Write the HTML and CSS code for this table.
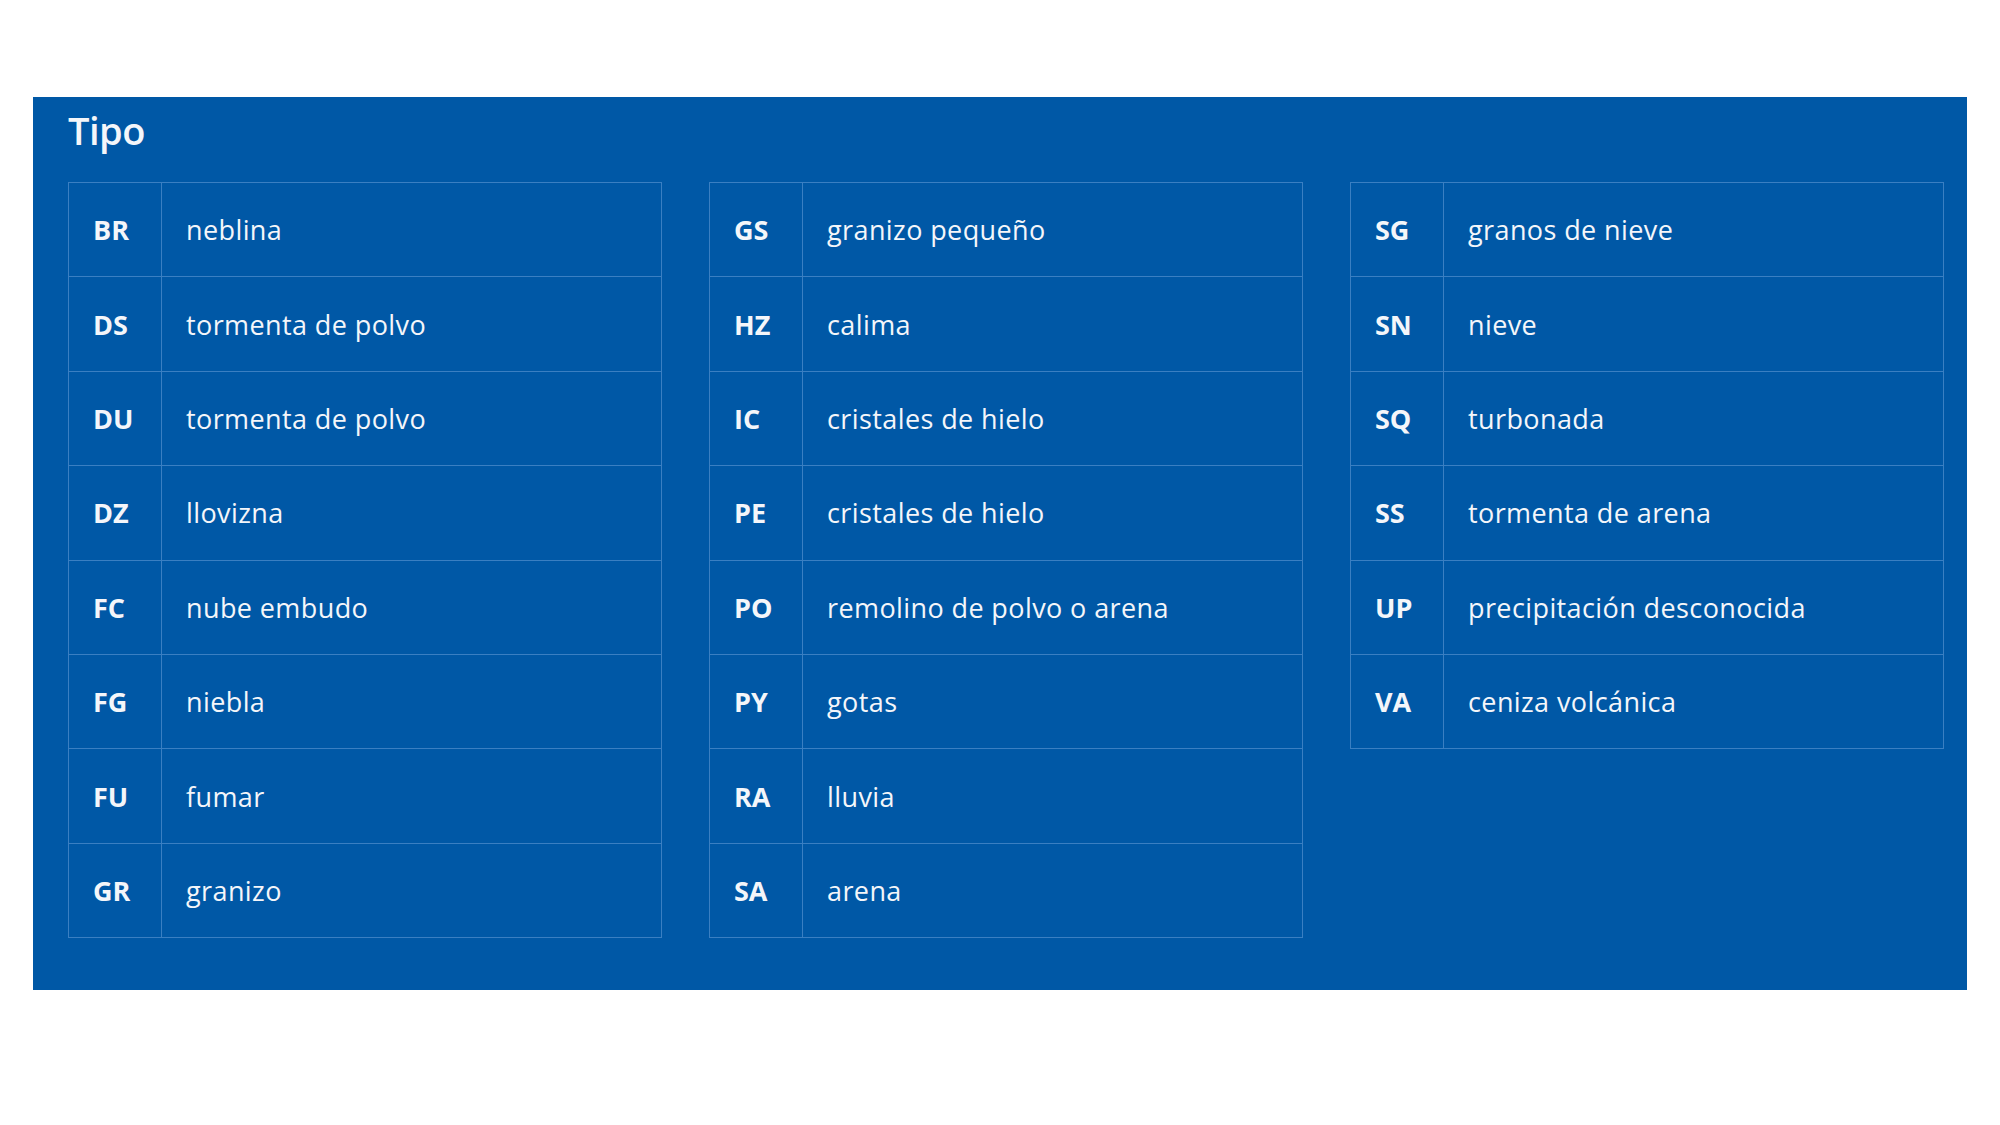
FILE: index.html
```html
<html>
  <head>
    <link rel="stylesheet" href="styles.css">
  </head>
  <body>
    <div class="panel">
      <h2 class="title">Tipo</h2>
      <div class="tables">
        <table class="codes">
          <tr><td class="code">BR</td><td class="desc">neblina</td></tr>
          <tr><td class="code">DS</td><td class="desc">tormenta de polvo</td></tr>
          <tr><td class="code">DU</td><td class="desc">tormenta de polvo</td></tr>
          <tr><td class="code">DZ</td><td class="desc">llovizna</td></tr>
          <tr><td class="code">FC</td><td class="desc">nube embudo</td></tr>
          <tr><td class="code">FG</td><td class="desc">niebla</td></tr>
          <tr><td class="code">FU</td><td class="desc">fumar</td></tr>
          <tr><td class="code">GR</td><td class="desc">granizo</td></tr>
        </table>
        <table class="codes">
          <tr><td class="code">GS</td><td class="desc">granizo pequeño</td></tr>
          <tr><td class="code">HZ</td><td class="desc">calima</td></tr>
          <tr><td class="code">IC</td><td class="desc">cristales de hielo</td></tr>
          <tr><td class="code">PE</td><td class="desc">cristales de hielo</td></tr>
          <tr><td class="code">PO</td><td class="desc">remolino de polvo o arena</td></tr>
          <tr><td class="code">PY</td><td class="desc">gotas</td></tr>
          <tr><td class="code">RA</td><td class="desc">lluvia</td></tr>
          <tr><td class="code">SA</td><td class="desc">arena</td></tr>
        </table>
        <table class="codes">
          <tr><td class="code">SG</td><td class="desc">granos de nieve</td></tr>
          <tr><td class="code">SN</td><td class="desc">nieve</td></tr>
          <tr><td class="code">SQ</td><td class="desc">turbonada</td></tr>
          <tr><td class="code">SS</td><td class="desc">tormenta de arena</td></tr>
          <tr><td class="code">UP</td><td class="desc">precipitación desconocida</td></tr>
          <tr><td class="code">VA</td><td class="desc">ceniza volcánica</td></tr>
        </table>
      </div>
    </div>
  </body>
</html>
```

FILE: styles.css
```css
body { margin: 0; background: #fff; font-family: "Open Sans", "Noto Sans", sans-serif; color: #f4f6fa; }
.panel { margin: 97px 0 0 33px; width: 1934px; height: 893px; box-sizing: border-box; padding: 12px 23px 0 35px; background: #0058a6; }
.title { margin: 0 0 31px; font-size: 38px; line-height: 42px; font-weight: 600; letter-spacing: -0.5px; }
.tables { display: flex; align-items: flex-start; gap: 47px; }
.codes { width: 594px; border-collapse: collapse; border: 1px solid #3a7fc2; }
.codes tr { height: 94.4px; }
.codes td { border: 1px solid #3a7fc2; padding: 0 0 0 24px; font-size: 27px; vertical-align: middle; }
.code { width: 68px; font-weight: 700; }
.desc { font-weight: 400; letter-spacing: 0.4px; padding-left: 22px; }
```
